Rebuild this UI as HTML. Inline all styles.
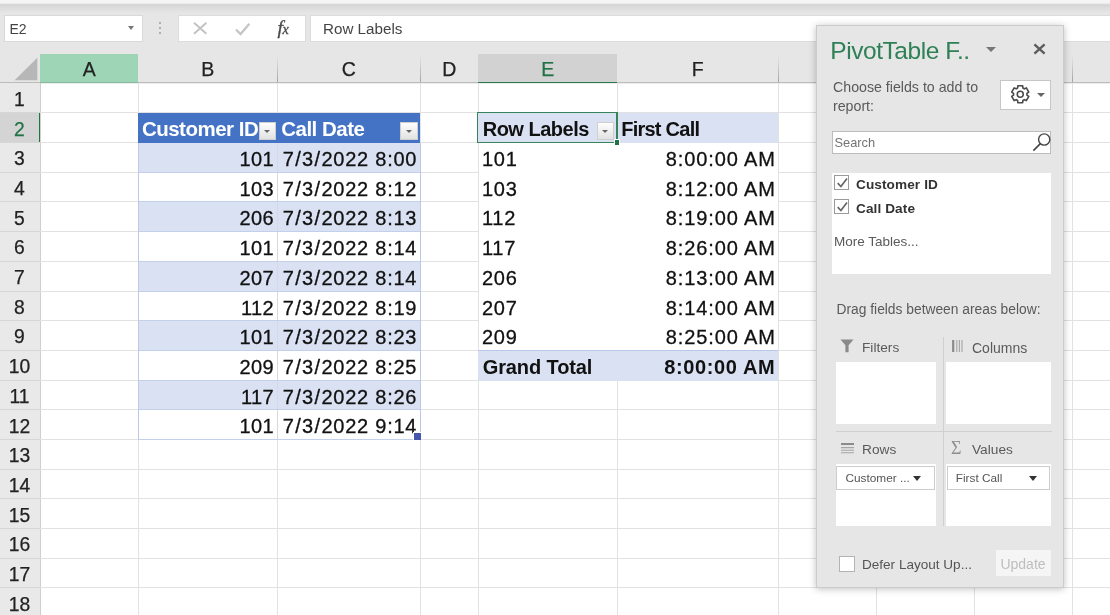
<!DOCTYPE html>
<html><head><meta charset="utf-8"><title>PivotTable</title>
<style>
html,body{margin:0;padding:0;}
body{width:1110px;height:615px;overflow:hidden;background:#fff;position:relative;font-family:"Liberation Sans",sans-serif;color:#000;}
div,span{position:absolute;box-sizing:border-box;white-space:nowrap;}
.cell{font-size:20px;line-height:29.68px;height:29.68px;color:#111;letter-spacing:0.75px;-webkit-text-stroke:0.3px #111;}
.r{text-align:right;}
.b{font-weight:bold;-webkit-text-stroke:0 !important;}
i{font-style:normal;padding:0 0.6px;}
.hl{background:#e2e2e2;height:1px;}
.vl{background:#e2e2e2;width:1px;}
.colh{top:54px;height:29px;font-size:19.5px;line-height:30.4px;text-align:center;color:#2a2a2a;-webkit-text-stroke:0.25px;}
.rowh{left:0;width:40px;font-size:19.3px;text-align:center;color:#222;line-height:29.68px;height:29.68px;-webkit-text-stroke:0.25px;}
.fb{width:17.5px;height:18.5px;background:linear-gradient(#fefefe,#e2e2e2);border:1px solid #cfcfcf;}
.fb:after{content:"";position:absolute;left:4.6px;top:7.5px;border-left:3.4px solid transparent;border-right:3.4px solid transparent;border-top:3.8px solid #666;}
.pt{font-size:13.5px;color:#5a5a5a;}
</style></head><body>
<div id="w" style="left:0;top:0;width:1110px;height:615px;overflow:hidden;will-change:transform">

<div style="left:0;top:0;width:1110px;height:54px;background:#e6e6e6"></div>
<div style="left:0;top:0;width:1110px;height:13px;background:linear-gradient(#f5f5f5 0,#f3f3f3 24%,#d4d4d4 36%,#dcdcdc 60%,#e6e6e6 100%)"></div>
<div style="left:4px;top:15px;width:139px;height:27px;background:#fff;border:1px solid #d9d9d9"></div>
<div style="left:9.5px;top:15px;height:27px;line-height:28.6px;font-size:14px;color:#444">E2</div>
<div style="left:127.5px;top:26px;border-left:3.5px solid transparent;border-right:3.5px solid transparent;border-top:4px solid #777"></div>
<div style="left:158.5px;top:22px;width:2px;height:2px;background:#b0b0b0"></div>
<div style="left:158.5px;top:27px;width:2px;height:2px;background:#b0b0b0"></div>
<div style="left:158.5px;top:32px;width:2px;height:2px;background:#b0b0b0"></div>
<div style="left:178px;top:15px;width:128px;height:27px;background:#fff;border:1px solid #dcdcdc"></div>
<svg style="position:absolute;left:192px;top:21px" width="16" height="16" viewBox="0 0 16 16"><path d="M2 1.8 L14.4 12.8 M14.4 1.8 L2 12.8" stroke="#c2c2c2" stroke-width="1.9" fill="none"/></svg>
<svg style="position:absolute;left:233px;top:21px" width="18" height="16" viewBox="0 0 18 16"><path d="M3 8.6 L7.6 13 L16.4 2.8" stroke="#c6c6c6" stroke-width="2.3" fill="none"/></svg>
<div style="left:277.5px;top:14px;height:27px;line-height:27px;font-size:19.5px;font-style:italic;font-family:'Liberation Serif',serif;color:#4a4a4a;-webkit-text-stroke:0.35px #4a4a4a">f<span style="position:static;font-size:14px;margin-left:-0.5px">x</span></div>
<div style="left:310px;top:15px;width:810px;height:27px;background:#fff;border:1px solid #dcdcdc"></div>
<div style="left:323px;top:15px;height:27px;line-height:28.4px;font-size:15.2px;color:#444">Row Labels</div>
<div style="left:0;top:54px;width:1110px;height:29px;background:#e6e6e6"></div>
<div style="left:40px;top:54px;width:98.4px;height:29px;background:#9fd5b7"></div>
<div style="left:478px;top:54px;width:139px;height:29px;background:#d2d2d2"></div>
<div style="left:0;top:82px;width:1110px;height:1px;background:#bcbcbc"></div>
<div style="left:0;top:83px;width:1110px;height:1px;background:#ededed"></div>
<div style="left:40px;top:82px;width:98.4px;height:1px;background:#86b99c"></div>
<div style="left:478px;top:81.8px;width:139px;height:1.7px;background:#2a7a50"></div>
<svg style="position:absolute;left:14px;top:57px" width="24" height="24" viewBox="0 0 24 24"><path d="M23.3 0.8 L23.3 23.2 L0.6 23.2 Z" fill="#b7b7b7"/></svg>
<div class="colh" style="left:40.3px;width:98.1px;color:#222">A</div>
<div class="colh" style="left:138.4px;width:138.8px;color:#222">B</div>
<div class="colh" style="left:277.2px;width:143.0px;color:#222">C</div>
<div class="colh" style="left:420.2px;width:58.0px;color:#222">D</div>
<div class="colh" style="left:478.2px;width:139.0px;color:#217346">E</div>
<div class="colh" style="left:617.2px;width:161.0px;color:#222">F</div>
<div class="colh" style="left:778.2px;width:98.4px;color:#222">G</div>
<div class="colh" style="left:876.6px;width:97.8px;color:#222">H</div>
<div class="colh" style="left:974.4px;width:97.9px;color:#222">I</div>
<div class="colh" style="left:1072.3px;width:97.7px;color:#222">J</div>
<div style="left:276.7px;top:54px;width:1px;height:28px;background:linear-gradient(#e6e6e6,#d0d0d0 40%,#a2a2a2)"></div>
<div style="left:419.7px;top:54px;width:1px;height:28px;background:linear-gradient(#e6e6e6,#d0d0d0 40%,#a2a2a2)"></div>
<div style="left:777.7px;top:54px;width:1px;height:28px;background:linear-gradient(#e6e6e6,#d0d0d0 40%,#a2a2a2)"></div>
<div style="left:876.1px;top:54px;width:1px;height:28px;background:linear-gradient(#e6e6e6,#d0d0d0 40%,#a2a2a2)"></div>
<div style="left:973.9px;top:54px;width:1px;height:28px;background:linear-gradient(#e6e6e6,#d0d0d0 40%,#a2a2a2)"></div>
<div style="left:1071.8px;top:54px;width:1px;height:28px;background:linear-gradient(#e6e6e6,#d0d0d0 40%,#a2a2a2)"></div>
<div style="left:0;top:83.4px;width:40.3px;height:540px;background:#e9e9e9"></div>
<div style="left:0;top:113px;width:40.3px;height:30px;background:#d4d4d4"></div>
<div style="left:39.6px;top:83.4px;width:1px;height:540px;background:#cfcfcf"></div>
<div style="left:38.8px;top:112px;width:1.6px;height:31px;background:#217346"></div>
<div class="rowh" style="top:85.05px;left:-0.6px;color:#222">1</div>
<div style="left:0;top:112px;width:40px;height:1px;background:#d6d6d6"></div>
<div class="rowh" style="top:114.73px;left:-0.6px;color:#217346">2</div>
<div style="left:0;top:142px;width:40px;height:1px;background:#d6d6d6"></div>
<div class="rowh" style="top:144.41px;left:-0.6px;color:#222">3</div>
<div style="left:0;top:172px;width:40px;height:1px;background:#d6d6d6"></div>
<div class="rowh" style="top:174.09px;left:-0.6px;color:#222">4</div>
<div style="left:0;top:201px;width:40px;height:1px;background:#d6d6d6"></div>
<div class="rowh" style="top:203.77px;left:-0.6px;color:#222">5</div>
<div style="left:0;top:231px;width:40px;height:1px;background:#d6d6d6"></div>
<div class="rowh" style="top:233.45px;left:-0.6px;color:#222">6</div>
<div style="left:0;top:261px;width:40px;height:1px;background:#d6d6d6"></div>
<div class="rowh" style="top:263.13px;left:-0.6px;color:#222">7</div>
<div style="left:0;top:291px;width:40px;height:1px;background:#d6d6d6"></div>
<div class="rowh" style="top:292.81px;left:-0.6px;color:#222">8</div>
<div style="left:0;top:320px;width:40px;height:1px;background:#d6d6d6"></div>
<div class="rowh" style="top:322.49px;left:-0.6px;color:#222">9</div>
<div style="left:0;top:350px;width:40px;height:1px;background:#d6d6d6"></div>
<div class="rowh" style="top:352.17px;left:-0.6px;color:#222">10</div>
<div style="left:0;top:380px;width:40px;height:1px;background:#d6d6d6"></div>
<div class="rowh" style="top:381.85px;left:-0.6px;color:#222">11</div>
<div style="left:0;top:409px;width:40px;height:1px;background:#d6d6d6"></div>
<div class="rowh" style="top:411.53px;left:-0.6px;color:#222">12</div>
<div style="left:0;top:439px;width:40px;height:1px;background:#d6d6d6"></div>
<div class="rowh" style="top:441.21px;left:-0.6px;color:#222">13</div>
<div style="left:0;top:469px;width:40px;height:1px;background:#d6d6d6"></div>
<div class="rowh" style="top:470.89px;left:-0.6px;color:#222">14</div>
<div style="left:0;top:498px;width:40px;height:1px;background:#d6d6d6"></div>
<div class="rowh" style="top:500.57px;left:-0.6px;color:#222">15</div>
<div style="left:0;top:528px;width:40px;height:1px;background:#d6d6d6"></div>
<div class="rowh" style="top:530.25px;left:-0.6px;color:#222">16</div>
<div style="left:0;top:558px;width:40px;height:1px;background:#d6d6d6"></div>
<div class="rowh" style="top:559.93px;left:-0.6px;color:#222">17</div>
<div style="left:0;top:587px;width:40px;height:1px;background:#d6d6d6"></div>
<div class="rowh" style="top:589.61px;left:-0.6px;color:#222">18</div>
<div style="left:0;top:617px;width:40px;height:1px;background:#d6d6d6"></div>
<div class="hl" style="left:40.3px;top:112px;width:1080px"></div>
<div class="hl" style="left:40.3px;top:142px;width:1080px"></div>
<div class="hl" style="left:40.3px;top:172px;width:1080px"></div>
<div class="hl" style="left:40.3px;top:201px;width:1080px"></div>
<div class="hl" style="left:40.3px;top:231px;width:1080px"></div>
<div class="hl" style="left:40.3px;top:261px;width:1080px"></div>
<div class="hl" style="left:40.3px;top:291px;width:1080px"></div>
<div class="hl" style="left:40.3px;top:320px;width:1080px"></div>
<div class="hl" style="left:40.3px;top:350px;width:1080px"></div>
<div class="hl" style="left:40.3px;top:380px;width:1080px"></div>
<div class="hl" style="left:40.3px;top:409px;width:1080px"></div>
<div class="hl" style="left:40.3px;top:439px;width:1080px"></div>
<div class="hl" style="left:40.3px;top:469px;width:1080px"></div>
<div class="hl" style="left:40.3px;top:498px;width:1080px"></div>
<div class="hl" style="left:40.3px;top:528px;width:1080px"></div>
<div class="hl" style="left:40.3px;top:558px;width:1080px"></div>
<div class="hl" style="left:40.3px;top:587px;width:1080px"></div>
<div class="vl" style="left:137.9px;top:83.4px;height:540px"></div>
<div class="vl" style="left:276.7px;top:83.4px;height:540px"></div>
<div class="vl" style="left:419.7px;top:83.4px;height:540px"></div>
<div class="vl" style="left:477.7px;top:83.4px;height:540px"></div>
<div class="vl" style="left:616.7px;top:83.4px;height:540px"></div>
<div class="vl" style="left:777.7px;top:83.4px;height:540px"></div>
<div class="vl" style="left:876.1px;top:83.4px;height:540px"></div>
<div class="vl" style="left:973.9px;top:83.4px;height:540px"></div>
<div class="vl" style="left:1071.8px;top:83.4px;height:540px"></div>
<div class="vl" style="left:1169.5px;top:83.4px;height:540px"></div>
<div style="left:138.4px;top:113px;width:281.8px;height:30px;background:#4472c4"></div>
<div style="left:138.4px;top:143px;width:281.8px;height:30px;background:#d9e1f2"></div>
<div style="left:138.4px;top:172px;width:281.8px;height:1px;background:#c3d0ec"></div>
<div class="cell r" style="left:138.4px;width:135.8px;top:145.11px;letter-spacing:0.45px">101</div>
<div class="cell r" style="left:277.2px;width:140.0px;top:145.11px">7<i>/</i>3<i>/</i>2022 8:00</div>
<div style="left:138.4px;top:201px;width:281.8px;height:1px;background:#c3d0ec"></div>
<div class="cell r" style="left:138.4px;width:135.8px;top:174.79px;letter-spacing:0.45px">103</div>
<div class="cell r" style="left:277.2px;width:140.0px;top:174.79px">7<i>/</i>3<i>/</i>2022 8:12</div>
<div style="left:138.4px;top:202px;width:281.8px;height:30px;background:#d9e1f2"></div>
<div style="left:138.4px;top:231px;width:281.8px;height:1px;background:#c3d0ec"></div>
<div class="cell r" style="left:138.4px;width:135.8px;top:204.47px;letter-spacing:0.45px">206</div>
<div class="cell r" style="left:277.2px;width:140.0px;top:204.47px">7<i>/</i>3<i>/</i>2022 8:13</div>
<div style="left:138.4px;top:261px;width:281.8px;height:1px;background:#c3d0ec"></div>
<div class="cell r" style="left:138.4px;width:135.8px;top:234.15px;letter-spacing:0.45px">101</div>
<div class="cell r" style="left:277.2px;width:140.0px;top:234.15px">7<i>/</i>3<i>/</i>2022 8:14</div>
<div style="left:138.4px;top:262px;width:281.8px;height:30px;background:#d9e1f2"></div>
<div style="left:138.4px;top:291px;width:281.8px;height:1px;background:#c3d0ec"></div>
<div class="cell r" style="left:138.4px;width:135.8px;top:263.83px;letter-spacing:0.45px">207</div>
<div class="cell r" style="left:277.2px;width:140.0px;top:263.83px">7<i>/</i>3<i>/</i>2022 8:14</div>
<div style="left:138.4px;top:320px;width:281.8px;height:1px;background:#c3d0ec"></div>
<div class="cell r" style="left:138.4px;width:135.8px;top:293.51px;letter-spacing:0.45px">112</div>
<div class="cell r" style="left:277.2px;width:140.0px;top:293.51px">7<i>/</i>3<i>/</i>2022 8:19</div>
<div style="left:138.4px;top:321px;width:281.8px;height:30px;background:#d9e1f2"></div>
<div style="left:138.4px;top:350px;width:281.8px;height:1px;background:#c3d0ec"></div>
<div class="cell r" style="left:138.4px;width:135.8px;top:323.19px;letter-spacing:0.45px">101</div>
<div class="cell r" style="left:277.2px;width:140.0px;top:323.19px">7<i>/</i>3<i>/</i>2022 8:23</div>
<div style="left:138.4px;top:380px;width:281.8px;height:1px;background:#c3d0ec"></div>
<div class="cell r" style="left:138.4px;width:135.8px;top:352.87px;letter-spacing:0.45px">209</div>
<div class="cell r" style="left:277.2px;width:140.0px;top:352.87px">7<i>/</i>3<i>/</i>2022 8:25</div>
<div style="left:138.4px;top:381px;width:281.8px;height:29px;background:#d9e1f2"></div>
<div style="left:138.4px;top:409px;width:281.8px;height:1px;background:#c3d0ec"></div>
<div class="cell r" style="left:138.4px;width:135.8px;top:382.55px;letter-spacing:0.45px">117</div>
<div class="cell r" style="left:277.2px;width:140.0px;top:382.55px">7<i>/</i>3<i>/</i>2022 8:26</div>
<div style="left:138.4px;top:439px;width:281.8px;height:1px;background:#c3d0ec"></div>
<div class="cell r" style="left:138.4px;width:135.8px;top:412.23px;letter-spacing:0.45px">101</div>
<div class="cell r" style="left:277.2px;width:140.0px;top:412.23px">7<i>/</i>3<i>/</i>2022 9:14</div>
<div style="left:137.9px;top:143px;width:1px;height:297px;background:#bccaea"></div>
<div style="left:419.7px;top:143px;width:1px;height:297px;background:#bccaea"></div>
<div style="left:276.7px;top:143px;width:1px;height:297px;background:rgba(200,205,215,0.4)"></div>
<div class="cell b" style="left:141.9px;top:113.93px;color:#fff;font-size:20.5px;letter-spacing:-0.5px">Customer ID</div>
<div class="cell b" style="left:281.2px;top:113.93px;color:#fff;font-size:20.5px;letter-spacing:-0.5px">Call Date</div>
<div class="fb" style="left:258.5px;top:121.53px"></div>
<div class="fb" style="left:400px;top:121.53px"></div>
<div style="left:412.59999999999997px;top:432.4px;width:8px;height:7.6px;background:#4358ad;border-left:1px solid #fff;border-top:1px solid #fff"></div>
<div style="left:478.2px;top:113px;width:300.0px;height:30px;background:#d9e1f2"></div>
<div style="left:478.2px;top:351px;width:300.0px;height:30px;background:#d9e1f2"></div>
<div style="left:478.2px;top:350px;width:300.0px;height:1px;background:#b9c8e8"></div>
<div class="cell b" style="left:482.7px;top:114.63px;font-size:20px;letter-spacing:-0.5px">Row Labels</div>
<div class="cell b" style="left:621.2px;top:114.63px;font-size:20px;letter-spacing:-0.75px">First Call</div>
<div class="fb" style="left:596.5px;top:121.53px"></div>
<div class="cell b" style="left:482.7px;top:352.67px;font-size:20px;letter-spacing:-0.1px">Grand Total</div>
<div class="cell r b" style="left:617.2px;width:158.0px;top:352.67px;font-size:20px;letter-spacing:0.6px">8:00:00 AM</div>
<div style="left:478.8px;top:143px;width:298.8px;height:207px;background:#fff"></div>
<div class="cell" style="left:481.9px;top:145.11px">101</div>
<div class="cell r" style="left:617.2px;width:158.7px;top:145.11px;letter-spacing:0.9px">8:00:00 AM</div>
<div class="cell" style="left:481.9px;top:174.79px">103</div>
<div class="cell r" style="left:617.2px;width:158.7px;top:174.79px;letter-spacing:0.9px">8:12:00 AM</div>
<div class="cell" style="left:481.9px;top:204.47px">112</div>
<div class="cell r" style="left:617.2px;width:158.7px;top:204.47px;letter-spacing:0.9px">8:19:00 AM</div>
<div class="cell" style="left:481.9px;top:234.15px">117</div>
<div class="cell r" style="left:617.2px;width:158.7px;top:234.15px;letter-spacing:0.9px">8:26:00 AM</div>
<div class="cell" style="left:481.9px;top:263.83px">206</div>
<div class="cell r" style="left:617.2px;width:158.7px;top:263.83px;letter-spacing:0.9px">8:13:00 AM</div>
<div class="cell" style="left:481.9px;top:293.51px">207</div>
<div class="cell r" style="left:617.2px;width:158.7px;top:293.51px;letter-spacing:0.9px">8:14:00 AM</div>
<div class="cell" style="left:481.9px;top:323.19px">209</div>
<div class="cell r" style="left:617.2px;width:158.7px;top:323.19px;letter-spacing:0.9px">8:25:00 AM</div>
<div style="left:477.2px;top:111.7px;width:140.6px;height:1.25px;background:#37835c"></div>
<div style="left:477.2px;top:141.7px;width:140.6px;height:1.25px;background:#37835c"></div>
<div style="left:477.2px;top:111.7px;width:1.25px;height:31.25px;background:#37835c"></div>
<div style="left:616.3000000000001px;top:111.7px;width:1.25px;height:31.25px;background:#37835c"></div>
<div style="left:613.8000000000001px;top:139.4px;width:6.4px;height:6.4px;background:#217346;border:1px solid #fff"></div>
<div style="left:816px;top:25px;width:247.6px;height:563px;background:#e6e6e6;border:1px solid #cbcbcb;box-shadow:0 1px 7px rgba(0,0,0,0.25)"></div>
<div style="left:830.3px;top:33.8px;font-size:24.5px;line-height:34px;color:#2f8056;letter-spacing:-0.45px">PivotTable F..</div>
<div style="left:985.5px;top:47px;border-left:5px solid transparent;border-right:5px solid transparent;border-top:5.5px solid #777"></div>
<svg style="position:absolute;left:1032.6px;top:43px" width="13" height="12" viewBox="0 0 13 12"><path d="M1.4 1.4 L11.6 10.6 M11.6 1.4 L1.4 10.6" stroke="#5c5c5c" stroke-width="2.4" fill="none"/></svg>
<div class="pt" style="left:833px;top:77.5px;line-height:19.8px;white-space:normal;width:170px;font-size:14.2px">Choose fields to add to<br>report:</div>
<div style="left:1000px;top:80px;width:50.6px;height:29.5px;background:#fff;border:1px solid #c6c6c6"></div>
<svg style="position:absolute;left:1010px;top:84.3px" width="20.5" height="20.5" viewBox="0 0 24 24"><path fill="none" stroke="#4a4a4a" stroke-width="1.9" stroke-linejoin="round" d="M8.91 4.73 L9.16 2.10 L14.84 2.10 L15.09 4.73 L16.75 5.69 L19.15 4.59 L21.99 9.51 L19.84 11.04 L19.84 12.96 L21.99 14.49 L19.15 19.41 L16.75 18.31 L15.09 19.27 L14.84 21.90 L9.16 21.90 L8.91 19.27 L7.25 18.31 L4.85 19.41 L2.01 14.49 L4.16 12.96 L4.16 11.04 L2.01 9.51 L4.85 4.59 L7.25 5.69 Z"/><circle cx="12" cy="12" r="3.5" fill="none" stroke="#4a4a4a" stroke-width="1.8"/></svg>
<div style="left:1037px;top:92.5px;border-left:4px solid transparent;border-right:4px solid transparent;border-top:4.5px solid #666"></div>
<div style="left:832px;top:130.5px;width:218.5px;height:23.5px;background:#fff;border:1px solid #bcbcbc"></div>
<div class="pt" style="left:834.5px;top:130.5px;line-height:24px;color:#747474;font-size:12.8px">Search</div>
<svg style="position:absolute;left:1030.8px;top:130.6px" width="22" height="22" viewBox="0 0 22 22"><circle cx="13.2" cy="8.5" r="5.6" fill="none" stroke="#444" stroke-width="1.4"/><path d="M9.4 12.6 L2.4 19.6" stroke="#444" stroke-width="1.6"/></svg>
<div style="left:832px;top:173px;width:218.5px;height:101px;background:#fff"></div>
<div style="left:834px;top:174.5px;width:15.4px;height:15.4px;background:#fff;border:1px solid #9a9a9a"></div>
<svg style="position:absolute;left:834px;top:174.5px" width="16" height="16" viewBox="0 0 16 16"><path d="M3.7 8.2 L6.9 11.5 L13 3.6" fill="none" stroke="#666" stroke-width="1.7"/></svg>
<div class="pt b" style="left:856px;top:175.0px;line-height:20px;color:#333;font-size:13.6px;letter-spacing:0.1px">Customer ID</div>
<div style="left:834px;top:198.5px;width:15.4px;height:15.4px;background:#fff;border:1px solid #9a9a9a"></div>
<svg style="position:absolute;left:834px;top:198.5px" width="16" height="16" viewBox="0 0 16 16"><path d="M3.7 8.2 L6.9 11.5 L13 3.6" fill="none" stroke="#666" stroke-width="1.7"/></svg>
<div class="pt b" style="left:856px;top:198.5px;line-height:20px;color:#333;font-size:13.6px;letter-spacing:0.1px">Call Date</div>
<div class="pt" style="left:834px;top:232.3px;line-height:20px;font-size:13.5px">More Tables...</div>
<div class="pt" style="left:836.5px;top:299.5px;line-height:20px;font-size:13.8px">Drag fields between areas below:</div>
<div style="left:943px;top:337px;width:1.3px;height:189px;background:#d0d0d0"></div>
<div style="left:835.5px;top:430.5px;width:216px;height:1.3px;background:#d0d0d0"></div>
<div style="left:835.5px;top:361.7px;width:100.5px;height:62px;background:#fff"></div>
<div style="left:835.5px;top:464px;width:100.5px;height:62px;background:#fff"></div>
<div style="left:945.8px;top:361.7px;width:105.6px;height:62px;background:#fff"></div>
<div style="left:945.8px;top:464px;width:105.6px;height:62px;background:#fff"></div>
<svg style="position:absolute;left:839.5px;top:339px" width="14" height="14" viewBox="0 0 14 14"><path d="M0.5 0.5 H13.5 L8.6 6.2 V13.2 H5.4 V6.2 Z" fill="#8a8a8a"/></svg>
<div class="pt" style="left:862px;top:338px;line-height:20px;font-size:13.7px">Filters</div>
<svg style="position:absolute;left:951.5px;top:340px" width="12" height="12" viewBox="0 0 12 12"><path d="M1.2 0 V12" stroke="#8a8a8a" stroke-width="2.2"/><path d="M4.8 0 V12 M7.4 0 V12 M10 0 V12" stroke="#a5a5a5" stroke-width="1.1"/></svg>
<div class="pt" style="left:972px;top:338px;line-height:20px;font-size:14px">Columns</div>
<svg style="position:absolute;left:840.5px;top:442.5px" width="13" height="11" viewBox="0 0 13 11"><path d="M0 1 H13" stroke="#8a8a8a" stroke-width="2"/><path d="M0 4.6 H13 M0 7.2 H13 M0 9.8 H13" stroke="#a5a5a5" stroke-width="1.1"/></svg>
<div class="pt" style="left:862px;top:439.7px;line-height:20px;font-size:13.7px">Rows</div>
<div class="pt" style="left:951px;top:438px;line-height:20px;font-size:18px;font-family:'Liberation Serif',serif;color:#8f8f8f">&Sigma;</div>
<div class="pt" style="left:972px;top:439.7px;line-height:20px;font-size:13.7px">Values</div>
<div style="left:836.3px;top:466px;width:98.5px;height:23.6px;background:#fff;border:1px solid #cdcdcd"></div>
<div class="pt" style="left:845.5px;top:466.5px;line-height:23.5px;font-size:11.8px;color:#555">Customer ...</div>
<div style="left:913px;top:475.5px;border-left:4.8px solid transparent;border-right:4.8px solid transparent;border-top:5px solid #333"></div>
<div style="left:947.2px;top:466px;width:103px;height:23.6px;background:#fff;border:1px solid #cdcdcd"></div>
<div class="pt" style="left:955.8px;top:466.5px;line-height:23.5px;font-size:11.8px;color:#555">First Call</div>
<div style="left:1028.5px;top:475.5px;border-left:4.8px solid transparent;border-right:4.8px solid transparent;border-top:5px solid #333"></div>
<div style="left:838.5px;top:556px;width:16px;height:15.5px;background:#fff;border:1px solid #b4b4b4"></div>
<div class="pt" style="left:862px;top:554.5px;line-height:20px;font-size:13.55px;color:#555">Defer Layout Up...</div>
<div style="left:995.5px;top:549.7px;width:55px;height:26.6px;background:#f5f5f5"></div>
<div class="pt" style="left:995.5px;top:549.7px;width:55px;text-align:center;line-height:29.5px;font-size:14px;color:#bebebe">Update</div>
</div>
</body></html>
